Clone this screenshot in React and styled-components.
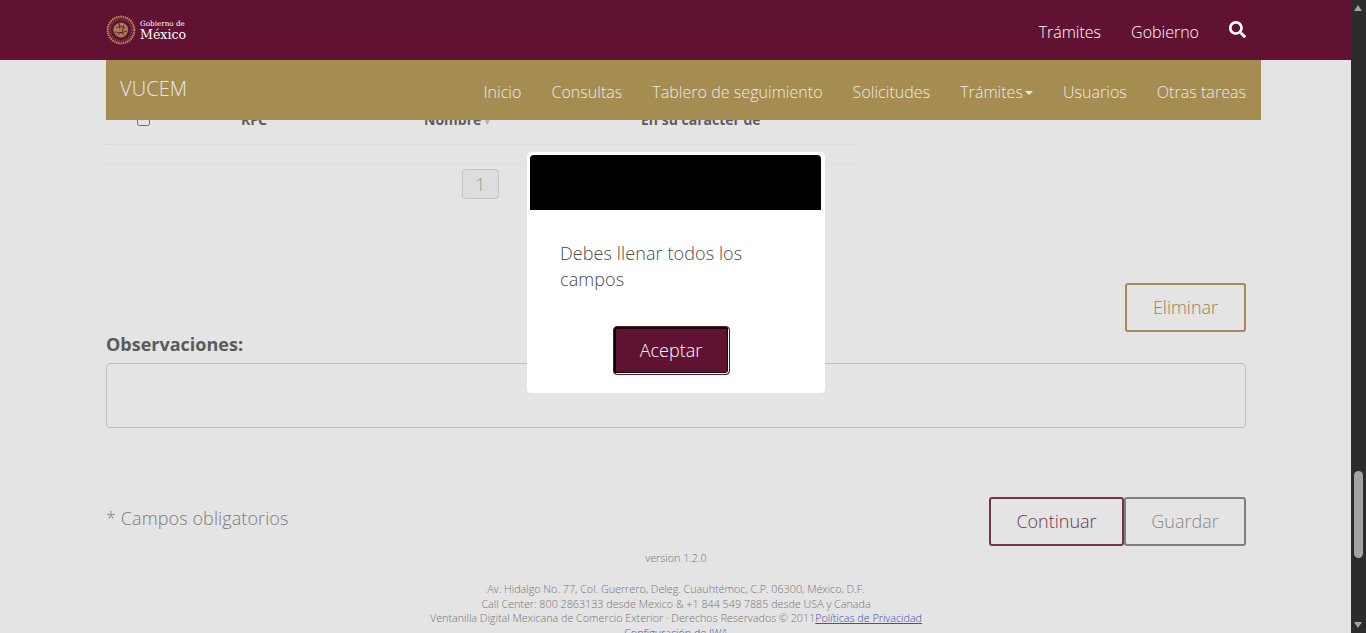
import React from 'react';
import styled, { createGlobalStyle } from 'styled-components';
import { FaSearch } from 'react-icons/fa';

const GlobalStyle = createGlobalStyle`
  html, body {
    margin: 0;
    padding: 0;
    height: 100%;
    overflow: hidden;
    background: #fff;
    font-family: "Open Sans", "Noto Sans", sans-serif;
  }
  * { box-sizing: border-box; }
`;

const NAV_ITEMS = ['Inicio', 'Consultas', 'Tablero de seguimiento', 'Solicitudes', 'Trámites', 'Usuarios', 'Otras tareas'];

const App = () => {
  return (
    <Screen>
      <GlobalStyle />
      <Viewport>
        <Page>
          <TableRow>
            <CheckCell><input type="checkbox" /></CheckCell>
            <HeadCell>RFC</HeadCell>
            <HeadCell>Nombre <SortMark>▾</SortMark></HeadCell>
            <HeadCell>En su carácter de</HeadCell>
          </TableRow>
          <EmptyRow />
          <Pagination><PageButton>1</PageButton></Pagination>
          <ActionRow>
            <OutlineButton $color="#b99a66" $text="#b0925c" $width={121}>Eliminar</OutlineButton>
          </ActionRow>
          <FieldLabel>Observaciones:</FieldLabel>
          <Observations />
          <FormFooter>
            <Required>* Campos obligatorios</Required>
            <ButtonGroup>
              <OutlineButton $color="#883858" $text="#74405f" $width={135}>Continuar</OutlineButton>
              <OutlineButton $color="#8f8f8f" $text="#999" $width={122}>Guardar</OutlineButton>
            </ButtonGroup>
          </FormFooter>
          <Footer>
            <Version>version 1.2.0</Version>
            <FooterLine>Av. Hidalgo No. 77, Col. Guerrero, Deleg. Cuauhtémoc, C.P. 06300, México, D.F.</FooterLine>
            <FooterLine>Call Center: 800 2863133 desde Mexico &amp; +1 844 549 7885 desde USA y Canada</FooterLine>
            <FooterLine>
              Ventanilla Digital Mexicana de Comercio Exterior · Derechos Reservados © 2011
              <FooterLink href="#">Políticas de Privacidad</FooterLink>
            </FooterLine>
            <FooterLine><FooterLink href="#">Configuración de IWA</FooterLink></FooterLine>
          </Footer>
        </Page>

        <Backdrop>
          <Modal>
            <ModalHeader />
            <ModalText>Debes llenar todos los campos</ModalText>
            <ModalActions>
              <AcceptButton>Aceptar</AcceptButton>
            </ModalActions>
          </Modal>
        </Backdrop>

        <Header>
          <TopBar>
            <Logo>
              <svg width="30" height="30" viewBox="0 0 30 30">
                <circle cx="15" cy="15" r="13.3" fill="none" stroke="#b48c58" strokeWidth="2.2" strokeDasharray="1.5 0.7" />
                <circle cx="15" cy="15" r="10.8" fill="none" stroke="#8c6244" strokeWidth="1.2" strokeDasharray="1 1" />
                <path d="M8 12c2-4 6-5 9-4 3 1 5 3 5 6 0 4-2 7-5 8-3 1-6 0-8-3-2-2-2-5-1-7z" fill="#a9814f" />
                <path d="M10 13l4-2 5 2M9 17l6 1 6-2M12 20l3-3 3 3M13 8l1 6M18 10l-2 8" fill="none" stroke="#611232" strokeWidth="0.9" />
              </svg>
              <LogoText>
                <LogoSmall>Gobierno de</LogoSmall>
                <LogoBig>México</LogoBig>
              </LogoText>
            </Logo>
            <TopLinks>
              <TopLink>Trámites</TopLink>
              <TopLink>Gobierno</TopLink>
              <SearchIcon><FaSearch size={17} /></SearchIcon>
            </TopLinks>
          </TopBar>
          <NavBar>
            <Brand>VUCEM</Brand>
            <NavList>
              {NAV_ITEMS.map((item) => (
                <NavItem key={item}>
                  {item}
                  {item === 'Trámites' && <Caret />}
                </NavItem>
              ))}
            </NavList>
          </NavBar>
        </Header>
      </Viewport>
      <Scrollbar>
        <ScrollArrow />
        <ScrollThumb />
        <ScrollArrow $down />
      </Scrollbar>
    </Screen>
  );
};

export default App;

/* Styled Components */

const Screen = styled.div`
  display: flex;
  height: 100vh;
  overflow: hidden;
`;

const Viewport = styled.div`
  position: relative;
  flex: 1;
  min-width: 0;
  overflow: hidden;
`;

const Page = styled.main`
  display: flex;
  flex-direction: column;
  margin: 0 105px 0 106px;
  padding-top: 94px;
`;

const TableRow = styled.div`
  display: grid;
  grid-template-columns: 135px 183px 217px 1fr;
  align-items: center;
  width: 751px;
  height: 51px;
  border-bottom: 1px solid #f2f2f2;
`;

const CheckCell = styled.div`
  display: flex;
  padding-left: 31px;
  input { margin: 0; width: 13px; height: 13px; }
`;

const HeadCell = styled.div`
  font-size: 14px;
  font-weight: 700;
  color: #6a6a6a;
`;

const SortMark = styled.span`
  font-size: 9px;
  color: #ccc;
`;

const EmptyRow = styled.div`
  width: 751px;
  height: 20px;
  border-bottom: 1px solid #f8f8f8;
`;

const Pagination = styled.div`
  display: flex;
  width: 751px;
  padding: 4px 0 0 356px;
`;

const PageButton = styled.div`
  display: flex;
  align-items: center;
  justify-content: center;
  width: 37px;
  height: 30px;
  border: 1px solid #ddd;
  border-radius: 3px;
  background: #f8f8f8;
  font-size: 18px;
  font-weight: 300;
  color: #aaa;
`;

const ActionRow = styled.div`
  display: flex;
  justify-content: flex-end;
  margin-top: 84px;
`;

const OutlineButton = styled.div`
  display: flex;
  align-items: center;
  justify-content: center;
  width: ${(p) => p.$width}px;
  height: 49px;
  padding-bottom: 1px;
  border: 2px solid ${(p) => p.$color};
  border-radius: 3px;
  font-size: 18px;
  font-weight: 300;
  color: ${(p) => p.$text};
`;

const FieldLabel = styled.label`
  display: block;
  height: 35px;
  margin-top: -4px;
  font-size: 18px;
  line-height: 32px;
  font-weight: 700;
  color: #666;
`;

const Observations = styled.div`
  height: 65px;
  border: 1px solid #d6d6d6;
  border-radius: 4px;
`;

const FormFooter = styled.div`
  display: flex;
  align-items: center;
  justify-content: space-between;
  margin-top: 69px;
`;

const Required = styled.div`
  margin-bottom: 7px;
  font-size: 18px;
  font-weight: 300;
  letter-spacing: 0.1px;
  color: #8c8c8c;
`;

const ButtonGroup = styled.div`
  display: flex;
`;

const Footer = styled.footer`
  display: flex;
  flex-direction: column;
  align-items: center;
  margin-top: 5px;
  font-size: 10.75px;
  font-weight: 300;
  color: #858585;
  text-align: center;
`;

const Version = styled.div`
  height: 31px;
  line-height: 15px;
`;

const FooterLine = styled.div`
  line-height: 14.5px;
`;

const FooterLink = styled.a`
  color: #4a58cc;
  text-decoration: underline;
`;

const Backdrop = styled.div`
  position: absolute;
  inset: 0;
  display: flex;
  justify-content: center;
  align-items: flex-start;
  padding-top: 152px;
  background: rgba(0, 0, 0, 0.105);
`;

const Modal = styled.div`
  width: 298px;
  height: 241px;
  margin-left: 1px;
  padding: 3px 4px 3px 3px;
  background: #fff;
  border-radius: 4px;
`;

const ModalHeader = styled.div`
  height: 55px;
  background: #000;
  border-radius: 4px 4px 0 0;
`;

const ModalText = styled.p`
  margin: 30px 0 0;
  padding: 0 30px;
  font-size: 18px;
  line-height: 26px;
  font-weight: 300;
  letter-spacing: 0.1px;
  color: #4a4a4a;
`;

const ModalActions = styled.div`
  display: flex;
  justify-content: center;
  margin: 34px 9px 0 0;
`;

const AcceptButton = styled.button`
  width: 117px;
  height: 49px;
  padding: 0 0 1px;
  border: 1px solid #611232;
  border-radius: 4px;
  box-shadow: inset -1px -1px 0 #fff, inset 0 0 0 2px #000;
  background: #611232;
  color: #fff;
  font-family: inherit;
  font-size: 18px;
  font-weight: 300;
`;

const Header = styled.header`
  position: absolute;
  top: 0;
  left: 0;
  right: 0;
`;

const TopBar = styled.div`
  display: flex;
  align-items: center;
  justify-content: space-between;
  height: 60px;
  padding: 0 105px 0 106px;
  background: #611232;
`;

const Logo = styled.div`
  display: flex;
  align-items: center;
  gap: 4px;
`;

const LogoText = styled.div`
  display: flex;
  flex-direction: column;
  font-family: "DejaVu Serif", "Liberation Serif", serif;
  color: #fff;
`;

const LogoSmall = styled.span`
  font-size: 7.2px;
  line-height: 8px;
`;

const LogoBig = styled.span`
  font-size: 12.6px;
  line-height: 13px;
`;

const TopLinks = styled.nav`
  display: flex;
  align-items: center;
  gap: 30px;
  margin-top: 4px;
`;

const TopLink = styled.a`
  font-size: 16px;
  font-weight: 300;
  color: #fff;
`;

const SearchIcon = styled.span`
  display: flex;
  margin: -6px 0 0 0;
  color: #fff;
`;

const NavBar = styled.div`
  display: flex;
  align-items: center;
  justify-content: space-between;
  width: 1155px;
  height: 60px;
  margin-left: 106px;
  padding: 0 15px 0 14px;
  background: #a58d52;
`;

const Brand = styled.div`
  margin-top: -4px;
  font-size: 20px;
  font-weight: 300;
  letter-spacing: 0.1px;
  color: #e6e6e6;
`;

const NavList = styled.nav`
  display: flex;
  align-items: center;
  gap: 30px;
  margin-top: 4px;
`;

const NavItem = styled.a`
  display: flex;
  align-items: center;
  font-size: 16px;
  font-weight: 300;
  letter-spacing: 0.04px;
  color: #eaeaea;
`;

const Caret = styled.span`
  width: 0;
  height: 0;
  margin: 2px 0 0 2px;
  border-top: 4px solid #eaeaea;
  border-left: 4px solid transparent;
  border-right: 4px solid transparent;
`;

const Scrollbar = styled.div`
  position: relative;
  flex: 0 0 15px;
  background: #2c2c2c;
`;

const ScrollArrow = styled.div`
  position: absolute;
  left: 3px;
  ${(p) => (p.$down ? 'bottom: 5px;' : 'top: 5px;')}
  border-left: 4.5px solid transparent;
  border-right: 4.5px solid transparent;
  ${(p) => (p.$down ? 'border-top: 6px solid #a3a3a3;' : 'border-bottom: 6px solid #a3a3a3;')}
`;

const ScrollThumb = styled.div`
  position: absolute;
  top: 471px;
  left: 3px;
  width: 9px;
  height: 87px;
  border-radius: 5px;
  background: #a3a3a3;
`;
